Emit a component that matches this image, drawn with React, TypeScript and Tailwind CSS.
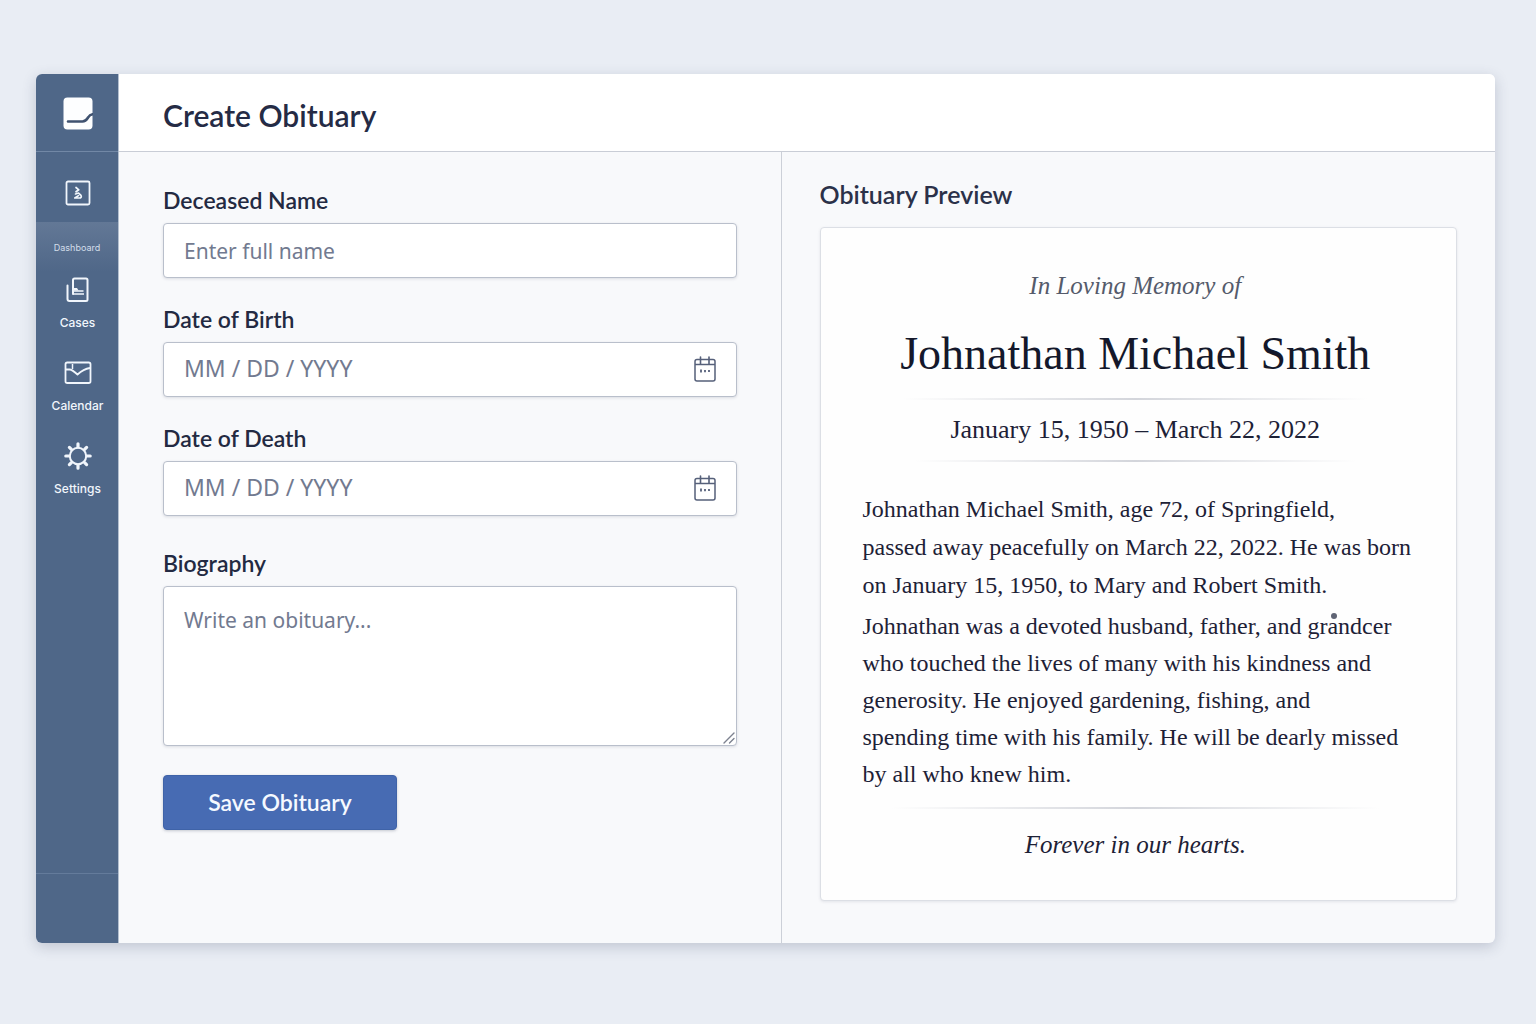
import React, { useState } from "react";

const LogoMark = () => (
  <svg width="30" height="33" viewBox="0 0 30 33" fill="none" aria-hidden="true">
    <rect x="0.5" y="0.5" width="29" height="32" rx="4" fill="#fdfeff" />
    <path
      d="M5 24.500h14.500c3.500 0 4.200-1.800 5.700-4.200 1-1.700 2.300-2.700 4.300-3"
      stroke="#3f5270"
      strokeWidth="2.600"
      strokeLinecap="round"
    />
  </svg>
);

const DashboardIcon = () => (
  <svg width="26" height="26" viewBox="0 0 26 26" fill="none" aria-hidden="true">
    <rect x="1.500" y="1.500" width="23" height="23" rx="1.500" stroke="currentColor" strokeWidth="1.800" />
    <path
      d="M11 7.500l2.800 2.300-2.800 2M10.500 14l3-1 2.500 2.400c.8 1.300 0 2.600-1.600 2.600H9.800l3.700-2.400"
      stroke="currentColor"
      strokeWidth="1.700"
      strokeLinecap="round"
      strokeLinejoin="round"
    />
  </svg>
);

const CasesIcon = () => (
  <svg width="24" height="26" viewBox="0 0 24 26" fill="none" aria-hidden="true">
    <path
      d="M7 17V3a1.500 1.500 0 011.500-1.500H20A1.500 1.500 0 0121.500 3v19.500A1.500 1.500 0 0120 24H3.500a2 2 0 01-2-2V8.500"
      stroke="currentColor"
      strokeWidth="2"
      strokeLinecap="round"
    />
    <path d="M7 17h11M7 14h10.500" stroke="currentColor" strokeWidth="1.600" />
    <path d="M7 11h4l1.500 2.500H7z" fill="currentColor" />
  </svg>
);

const CalendarNavIcon = () => (
  <svg width="28" height="24" viewBox="0 0 28 24" fill="none" aria-hidden="true">
    <rect x="1.500" y="1.500" width="25" height="20.500" rx="1.800" stroke="currentColor" strokeWidth="1.800" />
    <path
      d="M2 8.500h3.500c2.500 0 4.500 1.800 8 5 3-2.800 6.500-5.700 12.500-6.500"
      stroke="currentColor"
      strokeWidth="1.800"
      strokeLinejoin="round"
    />
    <path d="M8.500 3v5" stroke="currentColor" strokeWidth="1.500" />
  </svg>
);

const SettingsIcon = () => (
  <svg width="28" height="28" viewBox="0 0 28 28" fill="none" aria-hidden="true">
    <circle cx="14" cy="14" r="8.200" stroke="currentColor" strokeWidth="2" />
    <path
      d="M14 1.800v3.200M14 23v3.200M1.800 14H5M23 14h3.200M5.400 5.400l2 2M20.600 20.600l2 2M5.400 22.600l2-2M20.600 7.400l2-2"
      stroke="currentColor"
      strokeWidth="3.200"
      strokeLinecap="round"
    />
  </svg>
);

const DatePickerIcon = () => (
  <svg width="22" height="26" viewBox="0 0 22 26" fill="none" aria-hidden="true">
    <rect x="1" y="3.500" width="20" height="21.500" rx="2" stroke="currentColor" strokeWidth="1.500" />
    <path d="M1 8.500h20" stroke="currentColor" strokeWidth="1.500" />
    <path d="M6.500 1v7M15 1v7" stroke="currentColor" strokeWidth="1.600" strokeLinecap="round" />
    <path d="M7 13.500v3M11 14v2.200M15 14v2" stroke="currentColor" strokeWidth="1.800" />
  </svg>
);

const ResizeGrip = () => (
  <svg
    className="pointer-events-none absolute right-[2px] bottom-[2px]"
    width="12"
    height="12"
    viewBox="0 0 12 12"
    fill="none"
    aria-hidden="true"
  >
    <path d="M1 11L11 1M6.500 11L11 6.500" stroke="#7d8290" strokeWidth="1.400" strokeLinecap="round" />
  </svg>
);

const navItems = [
  { label: "Cases", icon: <CasesIcon /> },
  { label: "Calendar", icon: <CalendarNavIcon /> },
  { label: "Settings", icon: <SettingsIcon /> },
];

const Sidebar: React.FC = () => (
  <aside className="flex w-[83px] shrink-0 flex-col border-r border-[#b4c0d0] bg-[#4f6788] font-['Inter',sans-serif] text-[#f1f6fc]">
    <a
      href="#home"
      aria-label="Home"
      className="flex h-[78px] items-center justify-center border-b border-[#7288a6] pt-0.5 pl-px"
    >
      <LogoMark />
    </a>
    <a href="#dashboard" className="flex flex-col text-center">
      <span className="flex h-[70px] items-center justify-center pt-3 pl-px">
        <DashboardIcon />
      </span>
      <span className="bg-linear-to-b from-[#637896] to-[#4f6788] pt-[18px] pb-4 text-[9px] leading-4 text-[#d3deea]">
        Dashboard
      </span>
    </a>
    <nav className="flex flex-col gap-6 pl-px">
      {navItems.map((item) => (
        <a
          key={item.label}
          href={`#${item.label.toLowerCase()}`}
          className="flex flex-col items-center gap-[7px] text-xs leading-4 font-medium hover:text-white"
        >
          <span className="flex h-9 items-center">{item.icon}</span>
          {item.label}
        </a>
      ))}
    </nav>
    <div className="mt-auto h-[70px] border-t border-[#647b9b]" />
  </aside>
);

const labelClass = "mb-[11px] block text-[23px] leading-6 font-semibold text-[#232a42]";
const boxClass =
  "w-full rounded-[4px] border border-[#b9bfcb] bg-white shadow-[0_1px_3px_rgba(40,50,80,0.14)]";
const inputClass =
  "min-w-0 flex-1 bg-transparent font-['Noto_Sans',sans-serif] text-[#50586f] outline-none placeholder:text-[#727a90]";

interface DateFieldProps {
  id: string;
  label: string;
  value: string;
  onChange: (value: string) => void;
}

const DateField: React.FC<DateFieldProps> = ({ id, label, value, onChange }) => (
  <div>
    <label htmlFor={id} className={labelClass}>
      {label}
    </label>
    <div className={`${boxClass} flex h-[55px] items-center px-5 pb-0.5`}>
      <input
        id={id}
        type="text"
        placeholder="MM / DD / YYYY"
        value={value}
        onChange={(e) => onChange(e.target.value)}
        className={`${inputClass} text-[23px]`}
      />
      <button type="button" aria-label={`Pick ${label}`} className="text-[#56607a]">
        <DatePickerIcon />
      </button>
    </div>
  </div>
);

const ObituaryForm: React.FC = () => {
  const [name, setName] = useState("");
  const [birth, setBirth] = useState("");
  const [death, setDeath] = useState("");
  const [biography, setBiography] = useState("");

  return (
    <form
      onSubmit={(e) => e.preventDefault()}
      className="flex min-w-0 flex-col gap-[29px] border-r border-[#ccd0d8] px-11 pt-9 pb-11"
    >
      <div>
        <label htmlFor="name" className={labelClass}>
          Deceased Name
        </label>
        <div className={`${boxClass} flex h-[55px] items-center px-5 pt-0.5`}>
          <input
            id="name"
            type="text"
            placeholder="Enter full name"
            value={name}
            onChange={(e) => setName(e.target.value)}
            className={`${inputClass} text-[21px]`}
          />
        </div>
      </div>
      <DateField id="birth" label="Date of Birth" value={birth} onChange={setBirth} />
      <DateField id="death" label="Date of Death" value={death} onChange={setDeath} />
      <div className="pt-1.5">
        <label htmlFor="biography" className={labelClass}>
          Biography
        </label>
        <div className="relative">
          <textarea
            id="biography"
            placeholder="Write an obituary..."
            value={biography}
            onChange={(e) => setBiography(e.target.value)}
            className={`${boxClass} block h-40 resize-y px-5 py-[17px] font-['Noto_Sans',sans-serif] text-[21px] leading-8 text-[#50586f] outline-none placeholder:text-[#727a90] [&::-webkit-resizer]:bg-transparent`}
          />
          <ResizeGrip />
        </div>
      </div>
      <button
        type="submit"
        className="h-[55px] w-[234px] rounded-[4px] border border-[#3f63a8] bg-[#476bb3] text-[23px] font-semibold text-[#f5f9ff] shadow-[0_1px_3px_rgba(40,50,80,0.25)] hover:bg-[#3f62a8]"
      >
        Save Obituary
      </button>
    </form>
  );
};

const Divider = () => (
  <div className="h-[2px] bg-linear-to-r from-transparent via-[#d3d5db] to-transparent" />
);

const ObituaryPreview: React.FC = () => (
  <section className="min-w-0 px-[38px] pt-7 pb-[42px]">
    <h2 className="mb-[19px] text-[25px] leading-7 font-semibold text-[#2b3149]">
      Obituary Preview
    </h2>
    <article className="rounded-[4px] border border-[#dcdfe5] bg-[#fefefe] pt-[42px] pr-12 pb-[39px] pl-[42px] font-['Liberation_Serif',serif] text-[#1d2136] shadow-[0_1px_3px_rgba(40,50,80,0.1)]">
      <div className="text-center">
        <p className="text-[25px] leading-8 text-[#555b6b] italic">In Loving Memory of</p>
        <h3 className="mt-6 mb-4 text-[46px] leading-[56px] whitespace-nowrap text-[#14182b]">
          Johnathan Michael Smith
        </h3>
        <div className="px-10">
          <Divider />
        </div>
        <p className="my-[14px] text-[26px] leading-8">January 15, 1950 – March 22, 2022</p>
        <div className="px-[52px]">
          <Divider />
        </div>
      </div>
      <div className="mt-7 text-[24px] whitespace-nowrap">
        <p className="leading-[38px]">
          Johnathan Michael Smith, age 72, of Springfield,
          <br />
          passed away peacefully on March 22, 2022. He was born
          <br />
          on January 15, 1950, to Mary and Robert Smith.
        </p>
        <p className="mt-1 leading-[37px]">
          Johnathan was a devoted husband, father, and gr
          <span className="relative">
            a
            <span className="absolute top-0 left-1 size-[6px] rounded-full bg-[#5f6474]" />
          </span>
          ndcer
          <br />
          who touched the lives of many with his kindness and
          <br />
          generosity. He enjoyed gardening, fishing, and
          <br />
          spending time with his family. He will be dearly missed
          <br />
          by all who knew him.
        </p>
      </div>
      <div className="mt-[14px] px-7">
        <Divider />
      </div>
      <p className="mt-5 text-center text-[25px] leading-8 italic">Forever in our hearts.</p>
    </article>
  </section>
);

const App: React.FC = () => (
  <div className="min-h-screen bg-[#e9edf4] pt-[74px] pr-[41px] pb-20 pl-9 font-['Lato',sans-serif]">
    <div className="flex overflow-hidden rounded-[6px] bg-[#f8f9fb] shadow-[0_4px_14px_rgba(50,60,90,0.22)]">
      <Sidebar />
      <div className="flex min-w-0 flex-1 flex-col">
        <header className="flex h-[78px] items-center border-b border-[#c9cdd6] bg-white px-11 pt-1">
          <h1 className="text-[30px] leading-9 font-semibold text-[#252b45]">Create Obituary</h1>
        </header>
        <main className="grid flex-1 grid-cols-[13fr_14fr]">
          <ObituaryForm />
          <ObituaryPreview />
        </main>
      </div>
    </div>
  </div>
);

export default App;
